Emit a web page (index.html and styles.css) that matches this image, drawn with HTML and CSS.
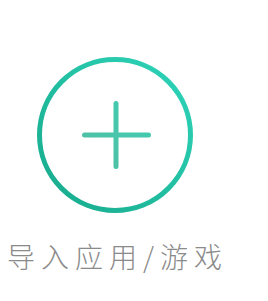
FILE: index.html
```html
<!DOCTYPE html>
<html lang="zh">
<head>
<meta charset="utf-8">
<link rel="stylesheet" href="styles.css">
</head>
<body>
<div class="page">
  <div class="icon">
    <svg width="156" height="156" viewBox="0 0 156 156">
      <defs>
        <linearGradient id="ring" x1="0" y1="1" x2="1" y2="0">
          <stop offset="0" stop-color="#17a98b"/>
          <stop offset="1" stop-color="#2ed5ba"/>
        </linearGradient>
        <linearGradient id="plus" x1="0" y1="1" x2="1" y2="0">
          <stop offset="0" stop-color="#52bea3"/>
          <stop offset="1" stop-color="#3fcdb2"/>
        </linearGradient>
      </defs>
      <circle cx="78" cy="78" r="75.5" fill="none" stroke="url(#ring)" stroke-width="5"/>
      <path d="M47.5 78 H111.5 M79 46.5 V109.5" stroke="url(#plus)" stroke-width="5" stroke-linecap="round" fill="none"/>
    </svg>
  </div>
  <div class="label">导入应用/游戏</div>
</div>
</body>
</html>
```
FILE: styles.css
```css
html, body {
  margin: 0;
  padding: 0;
  background: #ffffff;
}
.page {
  display: flex;
  flex-direction: column;
  align-items: flex-start;
  padding-top: 57px;
}
.icon {
  margin-left: 37px;
  width: 156px;
  height: 156px;
}
.icon svg {
  display: block;
}
.label {
  margin-top: 25px;
  margin-left: 7px;
  font-family: "Noto Sans CJK SC", sans-serif;
  font-weight: 300;
  font-size: 28px;
  line-height: 36px;
  letter-spacing: 6px;
  color: #8a8a8a;
}
```
